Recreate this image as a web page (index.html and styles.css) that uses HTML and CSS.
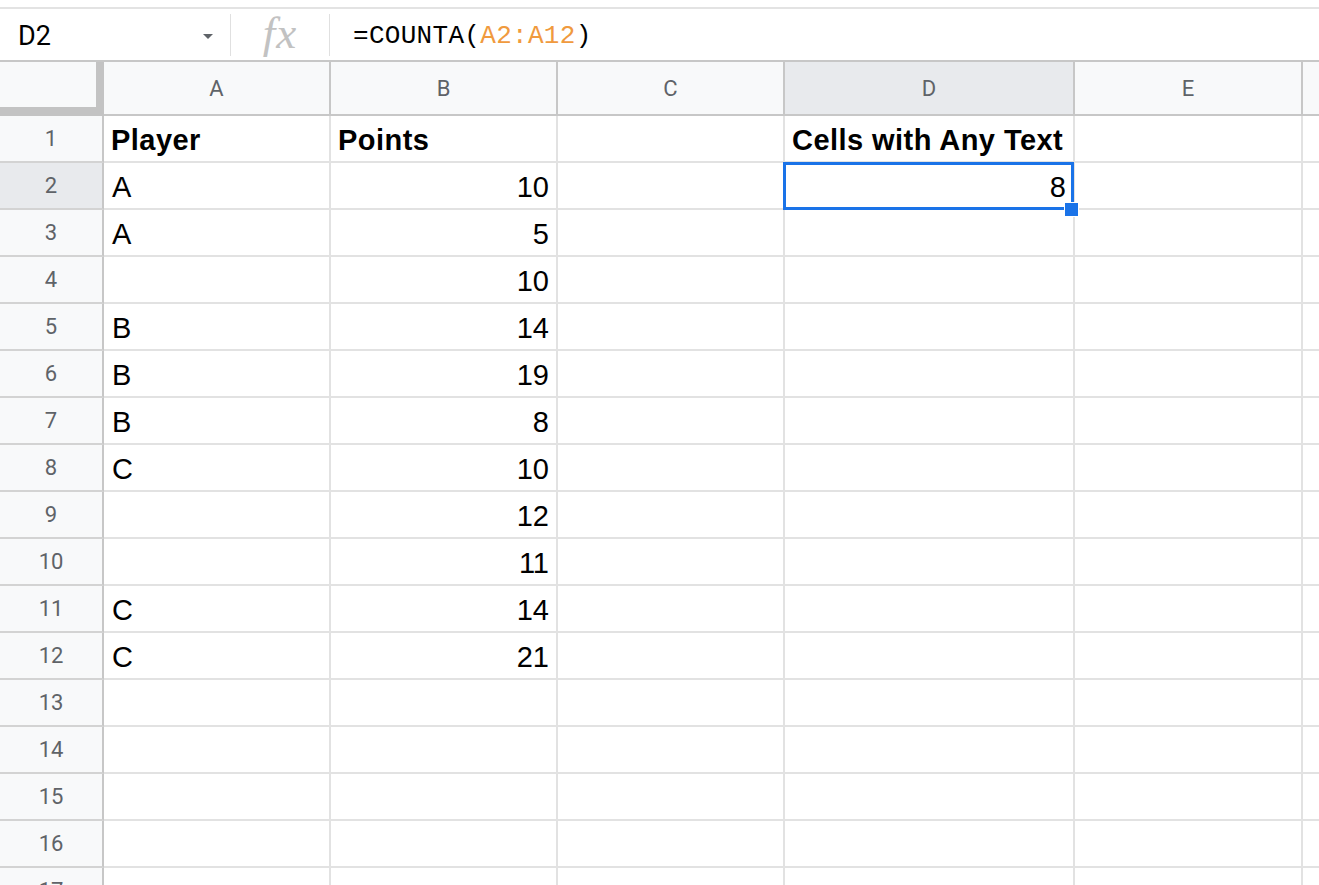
FILE: index.html
```html
<!DOCTYPE html>
<html lang="en">
<head>
<meta charset="utf-8">
<title>Sheet</title>
<link rel="stylesheet" href="styles.css">
</head>
<body>
<div class="app">
  <div class="toolbar-edge"></div>
  <div class="formula-bar">
    <div class="name-box"><span class="name">D2</span><span class="caret"></span></div>
    <div class="sep"></div>
    <div class="fx">fx</div>
    <div class="sep"></div>
    <div class="formula">=COUNTA(<span class="ref">A2:A12</span>)</div>
  </div>
  <div class="sheet">
    <div class="corner"></div>
    <div class="hd col">A</div><div class="hd col">B</div><div class="hd col">C</div><div class="hd col active">D</div><div class="hd col">E</div><div class="hd col last"></div>

    <div class="hd row">1</div><div class="cell b">Player</div><div class="cell b">Points</div><div class="cell"></div><div class="cell b">Cells with Any Text</div><div class="cell"></div><div class="cell"></div>
    <div class="hd row active">2</div><div class="cell">A</div><div class="cell n">10</div><div class="cell"></div><div class="cell n selected">8<span class="sel"></span><span class="handle"></span></div><div class="cell"></div><div class="cell"></div>
    <div class="hd row">3</div><div class="cell">A</div><div class="cell n">5</div><div class="cell"></div><div class="cell"></div><div class="cell"></div><div class="cell"></div>
    <div class="hd row">4</div><div class="cell"></div><div class="cell n">10</div><div class="cell"></div><div class="cell"></div><div class="cell"></div><div class="cell"></div>
    <div class="hd row">5</div><div class="cell">B</div><div class="cell n">14</div><div class="cell"></div><div class="cell"></div><div class="cell"></div><div class="cell"></div>
    <div class="hd row">6</div><div class="cell">B</div><div class="cell n">19</div><div class="cell"></div><div class="cell"></div><div class="cell"></div><div class="cell"></div>
    <div class="hd row">7</div><div class="cell">B</div><div class="cell n">8</div><div class="cell"></div><div class="cell"></div><div class="cell"></div><div class="cell"></div>
    <div class="hd row">8</div><div class="cell">C</div><div class="cell n">10</div><div class="cell"></div><div class="cell"></div><div class="cell"></div><div class="cell"></div>
    <div class="hd row">9</div><div class="cell"></div><div class="cell n">12</div><div class="cell"></div><div class="cell"></div><div class="cell"></div><div class="cell"></div>
    <div class="hd row">10</div><div class="cell"></div><div class="cell n">11</div><div class="cell"></div><div class="cell"></div><div class="cell"></div><div class="cell"></div>
    <div class="hd row">11</div><div class="cell">C</div><div class="cell n">14</div><div class="cell"></div><div class="cell"></div><div class="cell"></div><div class="cell"></div>
    <div class="hd row">12</div><div class="cell">C</div><div class="cell n">21</div><div class="cell"></div><div class="cell"></div><div class="cell"></div><div class="cell"></div>
    <div class="hd row">13</div><div class="cell"></div><div class="cell"></div><div class="cell"></div><div class="cell"></div><div class="cell"></div><div class="cell"></div>
    <div class="hd row">14</div><div class="cell"></div><div class="cell"></div><div class="cell"></div><div class="cell"></div><div class="cell"></div><div class="cell"></div>
    <div class="hd row">15</div><div class="cell"></div><div class="cell"></div><div class="cell"></div><div class="cell"></div><div class="cell"></div><div class="cell"></div>
    <div class="hd row">16</div><div class="cell"></div><div class="cell"></div><div class="cell"></div><div class="cell"></div><div class="cell"></div><div class="cell"></div>
    <div class="hd row">17</div><div class="cell"></div><div class="cell"></div><div class="cell"></div><div class="cell"></div><div class="cell"></div><div class="cell"></div>
  </div>
</div>
</body>
</html>
```

FILE: styles.css
```css
html, body {
  margin: 0;
  padding: 0;
  background: #ffffff;
}

body {
  overflow: hidden;
  font-family: Roboto, "Liberation Sans", Arial, sans-serif;
}

.app {
  width: 1319px;
  height: 885px;
  overflow: hidden;
}

/* thin edge of the toolbar above the formula bar */
.toolbar-edge {
  height: 7px;
  border-bottom: 2px solid #e3e3e3;
}

/* formula bar: name box, fx label, formula text */
.formula-bar {
  height: 51px;
  border-bottom: 2px solid #c7c7c7;
  display: flex;
  align-items: center;
}

.name-box {
  width: 230px;
  box-sizing: border-box;
  padding-left: 18px;
  padding-right: 17px;
  display: flex;
  align-items: center;
  justify-content: space-between;
}

.name {
  font-size: 27px;
  color: #000000;
  padding-top: 2px;
}

.caret {
  width: 0;
  height: 0;
  border-left: 5px solid transparent;
  border-right: 5px solid transparent;
  border-top: 5px solid #5f6368;
  margin-top: 4px;
}

.sep {
  width: 1px;
  height: 42px;
  background: #e0e0e0;
}

.fx {
  width: 98px;
  text-align: center;
  font-family: "Liberation Serif", "Times New Roman", serif;
  font-style: italic;
  font-size: 45px;
  letter-spacing: 1px;
  color: #c2c2c2;
  line-height: 1;
  padding-bottom: 2px;
}

.formula {
  padding-left: 23px;
  font-family: "Liberation Mono", "DejaVu Sans Mono", monospace;
  font-size: 26px;
  letter-spacing: 0.3px;
  color: #000000;
  padding-top: 2px;
}

.ref {
  color: #f09a3e;
}

/* grid of cells */
.sheet {
  display: grid;
  grid-template-columns: 104px 227px 227px 227px 290px 228px 1fr;
  grid-template-rows: 54px;
  grid-auto-rows: 47px;
}

.cell {
  box-sizing: border-box;
  border-right: 2px solid #e2e2e2;
  border-bottom: 2px solid #e2e2e2;
  display: flex;
  align-items: flex-end;
  padding: 0 8px 4px 8px;
  font-family: "Liberation Sans", Arial, sans-serif;
  font-size: 29px;
  line-height: 1.15;
  color: #000000;
  white-space: nowrap;
}

.cell.b {
  font-weight: bold;
  letter-spacing: 0.45px;
  padding-left: 7px;
}

.cell.n {
  justify-content: flex-end;
  padding-right: 7px;
}

.cell.selected {
  position: relative;
  z-index: 2;
}

.hd {
  box-sizing: border-box;
  background: #f8f9fa;
  border-right: 2px solid #c7c7c7;
  border-bottom: 2px solid #c7c7c7;
  display: flex;
  align-items: center;
  justify-content: center;
  font-size: 22px;
  color: #5f6368;
}

.hd.row {
  border-bottom-color: #d3d3d3;
}

.hd.active {
  background: #e8eaed;
}

.hd.last {
  border-right: none;
}

.corner {
  box-sizing: border-box;
  background: #f8f9fa;
  border-right: 8px solid #c3c3c3;
  border-bottom: 9px solid #c3c3c3;
}

/* active cell outline and fill handle */
.sel {
  position: absolute;
  top: -1px;
  left: -2px;
  right: -1px;
  bottom: -2px;
  border: 3px solid #1a73e8;
}

.handle {
  position: absolute;
  left: 279px;
  top: 39px;
  width: 13px;
  height: 13px;
  background: #1a73e8;
  border: 1px solid #ffffff;
}
```
